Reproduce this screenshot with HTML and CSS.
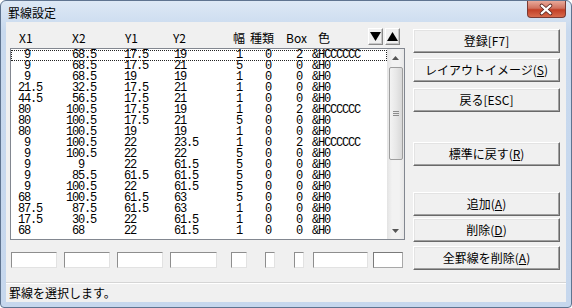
FILE: index.html
```html
<!DOCTYPE html>
<html lang="ja">
<head>
    <meta charset="UTF-8">
    <title>罫線設定</title>
    <link rel="stylesheet" href="styles.css">
</head>
<body>
    <div class="window">
        <div class="titlebar">
            <span class="title">罫線設定</span>
            <div class="close">
                <svg width="39" height="17" viewBox="0 0 39 17">
                    <path d="M15 4.5 L24 12.5 M24 4.5 L15 12.5" stroke="#5a2520" stroke-width="4" stroke-linecap="round"/>
                    <path d="M15 4.5 L24 12.5 M24 4.5 L15 12.5" stroke="#fff" stroke-width="2.2" stroke-linecap="round"/>
                </svg>
            </div>
        </div>
        <div class="client">
            <div class="main">
                <div class="left">
                    <div class="head">
                        <span class="h-x1">X1</span>
                        <span class="h-x2">X2</span>
                        <span class="h-y1">Y1</span>
                        <span class="h-y2">Y2</span>
                        <span class="h-w">幅</span>
                        <span class="h-t">種類</span>
                        <span class="h-box">Box</span>
                        <span class="h-col">色</span>
                        <button class="arrow"><svg width="11" height="9" viewBox="0 0 11 9"><polygon points="0,0 11,0 5.5,9" fill="#000"/></svg></button>
                        <button class="arrow"><svg width="11" height="9" viewBox="0 0 11 9"><polygon points="0,9 11,9 5.5,0" fill="#000"/></svg></button>
                    </div>
                    <div class="list">
                        <div class="rows">
                            <div class="row focus"><span class="c1"> 9</span><span class="c2"> 68.5</span><span class="c3">17.5</span><span class="c4">19</span><span class="c5">1</span><span class="c6">0</span><span class="c7">2</span><span>&amp;HCCCCCC</span></div>
                            <div class="row"><span class="c1"> 9</span><span class="c2"> 68.5</span><span class="c3">17.5</span><span class="c4">21</span><span class="c5">5</span><span class="c6">0</span><span class="c7">0</span><span>&amp;H0</span></div>
                            <div class="row"><span class="c1"> 9</span><span class="c2"> 68.5</span><span class="c3">19</span><span class="c4">19</span><span class="c5">1</span><span class="c6">0</span><span class="c7">0</span><span>&amp;H0</span></div>
                            <div class="row"><span class="c1">21.5</span><span class="c2"> 32.5</span><span class="c3">17.5</span><span class="c4">21</span><span class="c5">1</span><span class="c6">0</span><span class="c7">0</span><span>&amp;H0</span></div>
                            <div class="row"><span class="c1">44.5</span><span class="c2"> 56.5</span><span class="c3">17.5</span><span class="c4">21</span><span class="c5">1</span><span class="c6">0</span><span class="c7">0</span><span>&amp;H0</span></div>
                            <div class="row"><span class="c1">80</span><span class="c2">100.5</span><span class="c3">17.5</span><span class="c4">19</span><span class="c5">1</span><span class="c6">0</span><span class="c7">2</span><span>&amp;HCCCCCC</span></div>
                            <div class="row"><span class="c1">80</span><span class="c2">100.5</span><span class="c3">17.5</span><span class="c4">21</span><span class="c5">5</span><span class="c6">0</span><span class="c7">0</span><span>&amp;H0</span></div>
                            <div class="row"><span class="c1">80</span><span class="c2">100.5</span><span class="c3">19</span><span class="c4">19</span><span class="c5">1</span><span class="c6">0</span><span class="c7">0</span><span>&amp;H0</span></div>
                            <div class="row"><span class="c1"> 9</span><span class="c2">100.5</span><span class="c3">22</span><span class="c4">23.5</span><span class="c5">1</span><span class="c6">0</span><span class="c7">2</span><span>&amp;HCCCCCC</span></div>
                            <div class="row"><span class="c1"> 9</span><span class="c2">100.5</span><span class="c3">22</span><span class="c4">22</span><span class="c5">5</span><span class="c6">0</span><span class="c7">0</span><span>&amp;H0</span></div>
                            <div class="row"><span class="c1"> 9</span><span class="c2">  9</span><span class="c3">22</span><span class="c4">61.5</span><span class="c5">5</span><span class="c6">0</span><span class="c7">0</span><span>&amp;H0</span></div>
                            <div class="row"><span class="c1"> 9</span><span class="c2"> 85.5</span><span class="c3">61.5</span><span class="c4">61.5</span><span class="c5">5</span><span class="c6">0</span><span class="c7">0</span><span>&amp;H0</span></div>
                            <div class="row"><span class="c1"> 9</span><span class="c2">100.5</span><span class="c3">22</span><span class="c4">61.5</span><span class="c5">5</span><span class="c6">0</span><span class="c7">0</span><span>&amp;H0</span></div>
                            <div class="row"><span class="c1">68</span><span class="c2">100.5</span><span class="c3">61.5</span><span class="c4">63</span><span class="c5">5</span><span class="c6">0</span><span class="c7">0</span><span>&amp;H0</span></div>
                            <div class="row"><span class="c1">87.5</span><span class="c2"> 87.5</span><span class="c3">61.5</span><span class="c4">63</span><span class="c5">1</span><span class="c6">0</span><span class="c7">0</span><span>&amp;H0</span></div>
                            <div class="row"><span class="c1">17.5</span><span class="c2"> 30.5</span><span class="c3">22</span><span class="c4">61.5</span><span class="c5">1</span><span class="c6">0</span><span class="c7">0</span><span>&amp;H0</span></div>
                            <div class="row"><span class="c1">68</span><span class="c2"> 68</span><span class="c3">22</span><span class="c4">61.5</span><span class="c5">1</span><span class="c6">0</span><span class="c7">0</span><span>&amp;H0</span></div>
                        </div>
                        <div class="vscroll">
                            <div class="sb-btn"><svg width="7" height="4" viewBox="0 0 7 4"><polygon points="0,4 7,4 3.5,0" fill="#555"/></svg></div>
                            <div class="thumb"><span class="grip"></span></div>
                            <div class="track"></div>
                            <div class="sb-btn"><svg width="7" height="4" viewBox="0 0 7 4"><polygon points="0,0 7,0 3.5,4" fill="#555"/></svg></div>
                        </div>
                    </div>
                    <div class="inputs">
                        <input type="text" class="in-x1">
                        <input type="text" class="in-x2">
                        <input type="text" class="in-y1">
                        <input type="text" class="in-y2">
                        <input type="text" class="in-w">
                        <input type="text" class="in-t">
                        <input type="text" class="in-box">
                        <input type="text" class="in-col">
                        <input type="text" class="in-last">
                    </div>
                </div>
                <div class="right">
                    <button class="btn b-reg">登録[F7]</button>
                    <button class="btn b-lay">レイアウトイメージ(<u>S</u>)</button>
                    <button class="btn b-back">戻る[ESC]</button>
                    <button class="btn b-std">標準に戻す(<u>R</u>)</button>
                    <button class="btn b-add">追加(<u>A</u>)</button>
                    <button class="btn b-del">削除(<u>D</u>)</button>
                    <button class="btn b-all">全罫線を削除(<u>A</u>)</button>
                </div>
            </div>
            <div class="status">罫線を選択します。</div>
        </div>
    </div>
</body>
</html>
```

FILE: styles.css
```css
* {
    box-sizing: border-box;
}
body {
    margin: 0;
    font-family: "Noto Sans CJK JP", "Liberation Sans", sans-serif;
    font-size: 12px;
    color: #000;
}
.window {
    width: 572px;
    height: 308px;
    display: flex;
    flex-direction: column;
    background: linear-gradient(#dde8f5, #c8d9ee 30px, #c6d7ed);
    border: 1px solid #5f7490;
    border-radius: 6px 6px 4px 4px;
}
.titlebar {
    height: 21px;
    display: flex;
    align-items: flex-start;
}
.title {
    padding: 4px 0 0 7px;
    line-height: 15px;
}
.close {
    margin-left: auto;
    margin-right: 5px;
    width: 39px;
    height: 17px;
    border: 1px solid #7a3a33;
    border-top: none;
    border-radius: 0 0 4px 4px;
    background: linear-gradient(#e9a99a, #d0725f 45%, #c23f26 55%, #d86a4c);
    display: flex;
}
.close svg {
    margin-left: -1px;
}
.client {
    flex: 1;
    margin: 0 5px 5px;
    background: #f0f0f0;
    display: flex;
    flex-direction: column;
}
.main {
    height: 260px;
    display: flex;
}
.status {
    flex: 1;
    border-top: 1px solid #d5d5d5;
    box-shadow: inset 0 1px #fff;
    padding: 1px 0 0 3px;
    line-height: 18px;
}

/* list side */
.left {
    margin-left: 4px;
    width: 395px;
}
.head {
    margin-top: 6px;
    height: 20px;
    display: flex;
    align-items: center;
    line-height: 14px;
}
.h-x1 { width: 62px; padding-left: 9px; }
.h-x2 { width: 53px; }
.h-y1 { width: 48px; }
.h-y2 { width: 60px; }
.h-w { width: 17px; }
.h-t { width: 36px; }
.h-box { width: 32px; }
.h-col { width: 50px; }
.arrow {
    align-self: flex-start;
    width: 15px;
    height: 17px;
    margin-right: 2px;
    padding: 0;
    background: #f0f0f0;
    border: 1px solid;
    border-color: #fff #8a8a8a #8a8a8a #fff;
    box-shadow: inset -1px -1px #c8c8c8;
    display: flex;
    align-items: center;
    justify-content: center;
}
.list {
    height: 192px;
    border: 1px solid #828790;
    background: #fff;
    display: flex;
}
.rows {
    width: 376px;
    padding-top: 1px;
    font-family: "Liberation Mono", monospace;
    font-size: 12px;
    letter-spacing: -1.2px;
}
.row {
    height: 11px;
    line-height: 11px;
    display: flex;
    white-space: pre;
}
.row.focus {
    outline: 1px dotted #222;
    outline-offset: -1px;
}
.c1 { width: 55px; padding-left: 7px; }
.c2 { width: 58px; }
.c3 { width: 50px; }
.c4 { width: 62px; }
.c5 { width: 29px; }
.c6 { width: 31px; }
.c7 { width: 16px; }
.vscroll {
    width: 17px;
    display: flex;
    flex-direction: column;
    background: linear-gradient(90deg, #e3e3e3, #f2f2f2 30%, #f2f2f2 70%, #e8e8e8);
}
.sb-btn {
    height: 17px;
    display: flex;
    align-items: center;
    justify-content: center;
}
.thumb {
    margin: 1px 1px 0 2px;
    height: 93px;
    border: 1px solid #9e9e9e;
    border-radius: 2px;
    background: linear-gradient(90deg, #f3f3f3, #e8e8e8 50%, #d8d8d8);
    display: flex;
    align-items: center;
    justify-content: center;
}
.grip {
    width: 6px;
    height: 5px;
    border-top: 1px solid #8c8c8c;
    border-bottom: 1px solid #8c8c8c;
    background: linear-gradient(transparent 1px, #8c8c8c 1px, #8c8c8c 2px, transparent 2px);
}
.track {
    flex: 1;
}
.inputs {
    margin-top: 12px;
    display: flex;
}
.inputs input {
    height: 16px;
    padding: 0;
    background: #fff;
    border: 1px solid;
    border-color: #8e8e8e #e2e2e2 #e2e2e2 #8e8e8e;
}
.in-x1 { width: 46px; margin-left: 1px; }
.in-x2 { width: 46px; margin-left: 7px; }
.in-y1 { width: 46px; margin-left: 7px; }
.in-y2 { width: 47px; margin-left: 7px; }
.in-w { width: 16px; margin-left: 14px; }
.in-t { width: 10px; margin-left: 18px; }
.in-box { width: 10px; margin-left: 19px; }
.in-col { width: 55px; margin-left: 9px; }
.inputs .in-last {
    width: 30px;
    margin-left: 5px;
    border-color: #7a7a7a #a8a8a8 #a8a8a8 #7a7a7a;
}

/* buttons */
.right {
    margin-left: 8px;
    width: 148px;
    display: flex;
    flex-direction: column;
}
.btn {
    width: 147px;
    height: 24px;
    padding: 0;
    font-family: "Noto Sans CJK JP", sans-serif;
    font-size: 12px;
    line-height: 14px;
    color: #000;
    background: #f0f0f0;
    border: 1px solid;
    border-color: #fff #696969 #696969 #fff;
    box-shadow: inset -1px -1px #a0a0a0, inset 1px 1px #e3e3e3;
}
.b-reg { margin-top: 7px; }
.b-lay { margin-top: 5px; }
.b-back { margin-top: 6px; }
.b-std { margin-top: 30px; }
.b-add { margin-top: 26px; }
.b-del { margin-top: 2px; }
.b-all { margin-top: 4px; }
```
